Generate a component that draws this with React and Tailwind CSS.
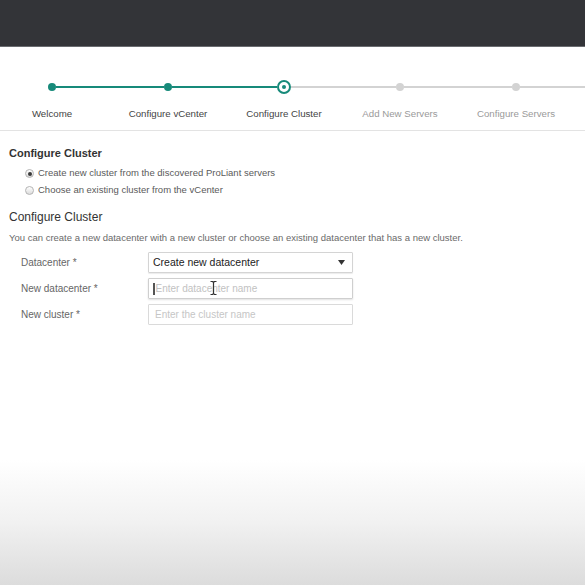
import React from 'react';

const steps = [
    { label: 'Welcome', state: 'done' },
    { label: 'Configure vCenter', state: 'done' },
    { label: 'Configure Cluster', state: 'current' },
    { label: 'Add New Servers', state: 'todo' },
    { label: 'Configure Servers', state: 'todo' },
];

function StepDot({ state }) {
    if (state === 'current') {
        return (
            <span className="w-[14px] h-[14px] rounded-full border-[2.5px] border-[#178a7a] bg-white flex items-center justify-center shrink-0">
                <span className="w-[4px] h-[4px] rounded-full bg-[#178a7a]"></span>
            </span>
        );
    }
    return (
        <span
            className={`w-[8px] h-[8px] rounded-full shrink-0 ${state === 'done' ? 'bg-[#178a7a]' : 'bg-[#d3d3d3]'}`}
        ></span>
    );
}

function Radio({ checked, label }) {
    return (
        <div className="flex items-center h-[17px]">
            <span className="w-[9px] h-[9px] rounded-full border border-[#b4b4b4] bg-gradient-to-b from-white to-[#dcdcdc] flex items-center justify-center shrink-0">
                {checked && <span className="w-[4px] h-[4px] rounded-full bg-[#3a3a3a]"></span>}
            </span>
            <span className="ml-[4px] text-[9.5px] text-[#5a5a5a]">{label}</span>
        </div>
    );
}

export default function App() {
    return (
        <div className="w-[585px] h-[585px] overflow-hidden bg-white flex flex-col font-['Liberation_Sans',Arial,sans-serif]">
            {/* Top bar */}
            <div className="h-[47px] shrink-0 bg-[#333438] border-b border-[#6a6c70]"></div>

            {/* Stepper */}
            <div className="pt-[33px] pb-[10px] border-b border-[#e3e3e3] overflow-hidden">
                <div className="flex ml-[-6px]">
                    {steps.map((step, i) => {
                        const leftColor = i === 0 ? 'bg-transparent' : step.state === 'todo' ? 'bg-[#d3d3d3]' : 'bg-[#178a7a]';
                        const rightColor = step.state === 'done' ? 'bg-[#178a7a]' : 'bg-[#d3d3d3]';
                        return (
                            <div key={step.label} className="w-[116px] shrink-0 flex flex-col items-center">
                                <div className="w-full h-[14px] flex items-center">
                                    <span className={`flex-1 h-[2px] ${leftColor}`}></span>
                                    <StepDot state={step.state} />
                                    <span className={`flex-1 h-[2px] ${rightColor}`}></span>
                                </div>
                                <span
                                    className={`mt-[14px] text-[9.7px] leading-[12px] whitespace-nowrap ${step.state === 'todo' ? 'text-[#9a9a9a]' : 'text-[#444]'}`}
                                >
                                    {step.label}
                                </span>
                            </div>
                        );
                    })}
                    {/* line running on to the next step, off screen */}
                    <div className="flex-1 h-[14px] flex items-center">
                        <span className="w-full h-[2px] bg-[#d3d3d3]"></span>
                    </div>
                </div>
            </div>

            {/* Content */}
            <div className="px-[9px]">
                <h3 className="mt-[15px] text-[11px] leading-[14px] font-bold text-[#333]">Configure Cluster</h3>
                <div className="mt-[5px] pl-[16px]">
                    <Radio checked label="Create new cluster from the discovered ProLiant servers" />
                    <Radio label="Choose an existing cluster from the vCenter" />
                </div>

                <h3 className="mt-[11px] text-[12px] leading-[15px] text-[#333]">Configure Cluster</h3>
                <p className="mt-[7px] text-[9.5px] leading-[12px] text-[#6a6a6a] whitespace-nowrap">
                    You can create a new datacenter with a new cluster or choose an existing datacenter that has a new cluster.
                </p>

                <div className="mt-[8px] pl-[12px] flex flex-col gap-[5px]">
                    <div className="flex items-center">
                        <span className="w-[127px] text-[10px] text-[#666]">Datacenter *</span>
                        <div className="w-[205px] h-[21px] border border-[#d4d4d4] rounded-[1px] shadow-[0_1px_1px_rgba(0,0,0,0.08)] flex items-center justify-between px-[4px]">
                            <span className="text-[10.5px] text-[#222]">Create new datacenter</span>
                            <svg width="7" height="5" viewBox="0 0 7 5" className="mr-[3px]">
                                <path d="M0 0 H7 L3.5 5 Z" fill="#333" />
                            </svg>
                        </div>
                    </div>
                    <div className="flex items-center">
                        <span className="w-[127px] text-[10px] text-[#666]">New datacenter *</span>
                        <div className="relative w-[205px] h-[21px] border border-[#cfcfcf] rounded-[1px] shadow-[0_1px_2px_rgba(0,0,0,0.12)] flex items-center px-[4px]">
                            <span className="w-[1.5px] h-[12px] bg-[#555] mr-[1px]"></span>
                            <span className="text-[10px] text-[#c2c2c2]">Enter datacenter name</span>
                            <svg width="7" height="14" viewBox="0 0 7 14" className="absolute left-[61px] top-[2px]">
                                <path d="M0.5 0.5 H2.5 L3.5 1.5 L4.5 0.5 H6.5 M3.5 1.5 V12.5 M0.5 13.5 H2.5 L3.5 12.5 L4.5 13.5 H6.5" stroke="#333" strokeWidth="1.2" fill="none" />
                            </svg>
                        </div>
                    </div>
                    <div className="flex items-center">
                        <span className="w-[127px] text-[10px] text-[#666]">New cluster *</span>
                        <div className="w-[205px] h-[21px] border border-[#dadada] rounded-[1px] flex items-center px-[6px]">
                            <span className="text-[10px] text-[#c6c6c6]">Enter the cluster name</span>
                        </div>
                    </div>
                </div>
            </div>

            {/* Bottom fade */}
            <div className="mt-auto h-[125px] shrink-0 bg-gradient-to-b from-white via-[#f1f1f1] to-[#dcdcdc]"></div>
        </div>
    );
}
